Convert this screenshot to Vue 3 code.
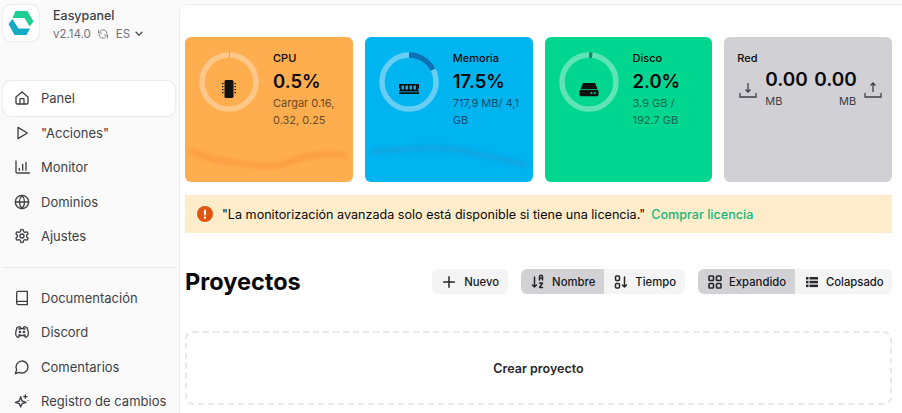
<template>
  <div class="page">
    <aside class="sidebar">
      <div class="brand">
        <div class="logo">
          <svg width="26" height="24" viewBox="0 0 26 24">
            <path d="M7.500 0H19.500L25.500 10.500 21.500 15.500 16.500 7H4.500Z" fill="#1fce91" />
            <path d="M4.500 8 .5 13 6.500 24H18.500L22 17.500H10.500Z" fill="#14a9c4" />
          </svg>
        </div>
        <div class="brand-text">
          <div class="brand-name">Easypanel</div>
          <div class="brand-meta">
            <span>v2.14.0</span>
            <svg class="refresh" width="12" height="12" viewBox="0 0 24 24" fill="none" stroke="#8a8a92" stroke-width="2" stroke-linecap="round" stroke-linejoin="round">
              <path d="M20 11A8 8 0 0 0 5.500 7L3 10M3 4v6h6" />
              <path d="M4 13a8 8 0 0 0 14.500 4l2.500-3M21 20v-6h-6" />
            </svg>
            <span class="lang">ES</span>
            <svg width="10" height="10" viewBox="0 0 24 24" fill="none" stroke="#55555c" stroke-width="3.500" stroke-linecap="round" stroke-linejoin="round">
              <path d="M5 8l7 7 7-7" />
            </svg>
          </div>
        </div>
      </div>

      <nav class="nav">
        <a v-for="item in mainNav" :key="item.label" class="nav-item" :class="{ active: item.active }">
          <svg width="16" height="16" viewBox="0 0 24 24" fill="none" stroke="#3f3f46" stroke-width="2" stroke-linecap="round" stroke-linejoin="round" v-html="item.icon"></svg>
          <span>{{ item.label }}</span>
        </a>
      </nav>
      <div class="sep"></div>
      <nav class="nav">
        <a v-for="item in docNav" :key="item.label" class="nav-item">
          <svg width="16" height="16" viewBox="0 0 24 24" fill="none" stroke="#3f3f46" stroke-width="2" stroke-linecap="round" stroke-linejoin="round" v-html="item.icon"></svg>
          <span>{{ item.label }}</span>
        </a>
      </nav>
    </aside>

    <main class="main">
      <section class="cards">
        <div v-for="card in cards" :key="card.title" class="card" :style="{ background: card.bg }">
          <div class="card-top">
            <div class="ring">
              <svg width="60" height="60" viewBox="0 0 60 60">
                <circle cx="30" cy="30" r="27" fill="none" :stroke="card.track" stroke-width="5.500" />
                <circle cx="30" cy="30" r="27" fill="none" :stroke="card.value" stroke-width="5.500" pathLength="100"
                  :stroke-dasharray="card.percent + ' 100'" transform="rotate(-90 30 30)" />
              </svg>
              <svg class="ring-icon" width="20" height="20" viewBox="0 0 20 20" v-html="card.icon"></svg>
            </div>
            <div class="card-text">
              <div class="card-title">{{ card.title }}</div>
              <div class="card-num">{{ card.percent }}%</div>
              <div class="card-sub" :style="{ color: card.sub }">{{ card.detail }}</div>
            </div>
          </div>
          <svg class="spark" width="168" height="30" viewBox="0 0 168 30">
            <defs>
              <filter :id="'blur' + card.title" x="-10%" y="-100%" width="120%" height="300%">
                <feGaussianBlur stdDeviation="2.200" />
              </filter>
            </defs>
            <path :d="card.line" fill="none" :stroke="card.spark" stroke-width="6" :filter="'url(#blur' + card.title + ')'" />
          </svg>
        </div>

        <div class="card net">
          <div class="card-title">Red</div>
          <div class="net-row">
            <svg class="net-icon" width="18" height="18" viewBox="0 0 18 18" fill="none" stroke="#3f3f46" stroke-width="1.300">
              <path d="M1 12v4h16v-4M9 2v9M6.500 8.500 9 11l2.500-2.500" />
            </svg>
            <div class="net-col">
              <div class="net-num">0.00</div>
              <div class="net-unit">MB</div>
            </div>
            <div class="net-col right">
              <div class="net-num">0.00</div>
              <div class="net-unit">MB</div>
            </div>
            <svg class="net-icon" width="18" height="18" viewBox="0 0 18 18" fill="none" stroke="#3f3f46" stroke-width="1.300">
              <path d="M1 12v4h16v-4M9 11V2M6.500 4.500 9 2l2.500 2.500" />
            </svg>
          </div>
          <svg class="spark" width="168" height="30" viewBox="0 0 168 30">
            <defs>
              <filter id="blurRed" x="-10%" y="-100%" width="120%" height="300%">
                <feGaussianBlur stdDeviation="2" />
              </filter>
            </defs>
            <path d="M5 14H162" fill="none" stroke="#a5a5ab" stroke-width="6" filter="url(#blurRed)" />
          </svg>
        </div>
      </section>

      <div class="alert">
        <svg class="alert-icon" width="16" height="16" viewBox="0 0 16 16">
          <circle cx="8" cy="8" r="8" fill="#e0560f" />
          <rect x="7" y="3.500" width="2" height="6" rx="1" fill="#fff" />
          <circle cx="8" cy="11.700" r="1.100" fill="#fff" />
        </svg>
        <span>"La monitorización avanzada solo está disponible si tiene una licencia."</span>
        <a class="alert-link">Comprar licencia</a>
      </div>

      <div class="head">
        <h1>Proyectos</h1>
        <div class="actions">
          <button class="btn new">
            <svg width="16" height="16" viewBox="0 0 24 24" fill="none" stroke="#27272a" stroke-width="2.200" stroke-linecap="round">
              <path d="M12 4v16M4 12h16" />
            </svg>
            <span>Nuevo</span>
          </button>
          <div class="group">
            <button class="btn on">
              <svg width="16" height="16" viewBox="0 0 16 16" fill="none" stroke="#27272a" stroke-width="1.500" stroke-linecap="round" stroke-linejoin="round">
                <path d="M4.500 3v10M2.500 11l2 2 2-2" />
                <path d="M9.500 6.500V3.200a1.500 1.500 0 0 1 3 0v3.300M9.500 4.800h3M9.500 9.500h3l-3 4.500h3" transform="translate(0 -.5)" />
              </svg>
              <span>Nombre</span>
            </button>
            <button class="btn">
              <svg width="16" height="16" viewBox="0 0 16 16" fill="none" stroke="#27272a" stroke-width="1.500" stroke-linecap="round" stroke-linejoin="round">
                <rect x="2.500" y="2" width="4" height="4.500" rx="1" />
                <rect x="2.500" y="9.500" width="4" height="4.500" rx="1" />
                <path d="M11.500 3v10M9.500 11l2 2 2-2" />
              </svg>
              <span>Tiempo</span>
            </button>
          </div>
          <div class="group">
            <button class="btn on fixed">
              <svg width="16" height="16" viewBox="0 0 16 16" fill="none" stroke="#27272a" stroke-width="1.600">
                <rect x="2" y="2" width="4.500" height="4.500" rx=".8" />
                <rect x="9.500" y="2" width="4.500" height="4.500" rx=".8" />
                <rect x="2" y="9.500" width="4.500" height="4.500" rx=".8" />
                <rect x="9.500" y="9.500" width="4.500" height="4.500" rx=".8" />
              </svg>
              <span>Expandido</span>
            </button>
            <button class="btn fixed">
              <svg width="16" height="16" viewBox="0 0 16 16" fill="#27272a">
                <rect x="2" y="3" width="2.500" height="2.500" />
                <rect x="5.500" y="3" width="8.500" height="2.500" />
                <rect x="2" y="6.800" width="2.500" height="2.500" />
                <rect x="5.500" y="6.800" width="8.500" height="2.500" />
                <rect x="2" y="10.600" width="2.500" height="2.500" />
                <rect x="5.500" y="10.600" width="8.500" height="2.500" />
              </svg>
              <span>Colapsado</span>
            </button>
          </div>
        </div>
      </div>

      <div class="create">Crear proyecto</div>
    </main>
  </div>
</template>

<script setup>
const mainNav = [
  { label: 'Panel', active: true, icon: '<path d="M3 10.500 12 3l9 7.500V19a2 2 0 0 1-2 2H5a2 2 0 0 1-2-2z"/><path d="M9 21v-7a1 1 0 0 1 1-1h4a1 1 0 0 1 1 1v7"/>' },
  { label: '"Acciones"', icon: '<path d="M6 3.500 20 12 6 20.500z"/>' },
  { label: 'Monitor', icon: '<path d="M3 3v16a2 2 0 0 0 2 2h18M8 17v-3M13 17V8M18 17V5"/>' },
  { label: 'Dominios', icon: '<circle cx="12" cy="12" r="10"/><path d="M2 12h20M12 2a15 15 0 0 1 0 20M12 2a15 15 0 0 0 0 20"/>' },
  { label: 'Ajustes', icon: '<path d="M12.200 2h-.4a2 2 0 0 0-2 2v.2a2 2 0 0 1-1 1.700l-.4.300a2 2 0 0 1-2 0l-.2-.1a2 2 0 0 0-2.700.7l-.2.400a2 2 0 0 0 .7 2.700l.2.100a2 2 0 0 1 1 1.700v.5a2 2 0 0 1-1 1.700l-.2.100a2 2 0 0 0-.7 2.700l.2.400a2 2 0 0 0 2.700.7l.2-.1a2 2 0 0 1 2 0l.4.300a2 2 0 0 1 1 1.700v.2a2 2 0 0 0 2 2h.4a2 2 0 0 0 2-2v-.2a2 2 0 0 1 1-1.700l.4-.3a2 2 0 0 1 2 0l.2.100a2 2 0 0 0 2.700-.7l.2-.4a2 2 0 0 0-.7-2.700l-.2-.1a2 2 0 0 1-1-1.700v-.5a2 2 0 0 1 1-1.700l.2-.1a2 2 0 0 0 .7-2.700l-.2-.4a2 2 0 0 0-2.700-.7l-.2.100a2 2 0 0 1-2 0l-.4-.3a2 2 0 0 1-1-1.700V4a2 2 0 0 0-2-2z"/><circle cx="12" cy="12" r="3"/>' },
]

const docNav = [
  { label: 'Documentación', icon: '<path d="M4 19.500v-15A2.500 2.500 0 0 1 6.500 2H20v20H6.500a2.500 2.500 0 0 1 0-5H20"/>' },
  { label: 'Discord', icon: '<circle cx="9" cy="12" r="1"/><circle cx="15" cy="12" r="1"/><path d="M7.500 7.500c3-1 6-1 9 0M7 16.500c3.500 1 6.500 1 10 0"/><path d="M15.500 17c0 1 1.500 3 2 3 1.500 0 2.800-1.700 3.500-3 .7-1.700.5-6-1.500-11.500-1.500-1-3-1.300-4.500-1.500l-1 2.500M8.500 17c0 1-1.400 3-2 3-1.500 0-2.800-1.700-3.500-3-.7-1.700-.5-6 1.500-11.500C6 4.500 7.500 4.200 9 4l1 2.500"/>' },
  { label: 'Comentarios', icon: '<path d="M7.900 20A9 9 0 1 0 4 16.100L2 22z"/>' },
  { label: 'Registro de cambios', icon: '<path d="M10 6.500 12 13l6 2-6 2-2 5-2-5-6-2 6-2z" transform="translate(0 -1)"/><path d="M17 3v5M14.500 5.500h5M21 11h.01"/>' },
]

const chip = '<rect x="5.500" y="1" width="9" height="18" rx="1.500" fill="#111"/><g fill="#111"><rect x="3" y="4" width="1.500" height="1.200"/><rect x="3" y="7" width="1.500" height="1.200"/><rect x="3" y="10" width="1.500" height="1.200"/><rect x="3" y="13" width="1.500" height="1.200"/><rect x="15.500" y="4" width="1.500" height="1.200"/><rect x="15.500" y="7" width="1.500" height="1.200"/><rect x="15.500" y="10" width="1.500" height="1.200"/><rect x="15.500" y="13" width="1.500" height="1.200"/></g>'
const ram = '<path d="M0 5h20v4.500H19v2h1V15H0v-3.500h1v-2H0z" fill="#111"/><g fill="#00b4f0"><rect x="2.500" y="6.500" width="2.500" height="4"/><rect x="6.500" y="6.500" width="2.500" height="4"/><rect x="10.500" y="6.500" width="2.500" height="4"/><rect x="14.500" y="6.500" width="2.500" height="4"/></g><rect x="0" y="12.500" width="20" height=".8" fill="#00b4f0"/>'
const disk = '<path d="M4 4h12l2.500 6H1.500z" fill="#111"/><rect x="0.500" y="10.800" width="19" height="6.500" rx="1.500" fill="#111"/><circle cx="12.500" cy="14" r="1" fill="#00d68f"/><circle cx="15.800" cy="14" r="1" fill="#00d68f"/>'

const cards = [
  { title: 'CPU', percent: '0.5', detail: 'Cargar 0.16, 0.32, 0.25', bg: '#ffae4f', track: '#ffc788', value: '#ef8e36', sub: '#6a4a25', spark: '#fc9d43', icon: chip, line: 'M5 8C20 16 35 20 68 23S100 20 120 15 150 13 162 13' },
  { title: 'Memoria', percent: '17.5', detail: '717,9 MB/ 4,1 GB', bg: '#00b4f0', track: '#66cdf5', value: '#0a72b5', sub: '#0b4f72', spark: '#0aa5e2', icon: ram, line: 'M5 10C30 8 50 6 72 6S120 14 162 23' },
  { title: 'Disco', percent: '2.0', detail: '3.9 GB / 192.7 GB', bg: '#00d68f', track: '#5fe4b6', value: '#168a66', sub: '#0e6a50', spark: '#06c484', icon: disk, line: 'M5 15H162' },
]
</script>

<style>
html,
body {
  background: #fafafa;
}
</style>

<style scoped>
.page {
  display: flex;
  width: 902px;
  height: 413px;
  overflow: hidden;
  background: #fafafa;
  font-family: Inter, "Liberation Sans", sans-serif;
  color: #09090b;
}
.sidebar {
  width: 179px;
  height: 413px;
  flex: none;
  box-sizing: border-box;
  padding: 5px 4px 0 3px;
}
.brand {
  display: flex;
  gap: 14px;
  height: 36px;
}
.logo {
  width: 36px;
  height: 36px;
  border-radius: 8px;
  background: #fff;
  box-shadow: 0 0 2px rgba(0, 0, 0, 0.18);
  display: flex;
  align-items: center;
  justify-content: center;
}
.brand-name {
  font-size: 12.500px;
  line-height: 16px;
  margin-top: 3px;
  font-weight: 500;
  color: #3f3f46;
}
.brand-meta {
  display: flex;
  align-items: center;
  font-size: 11.500px;
  line-height: 16px;
  margin-top: 2px;
  color: #71717a;
}
.refresh {
  margin: 0 7px 0 6px;
}
.lang {
  margin-right: 4px;
}
.nav {
  display: flex;
  flex-direction: column;
}
.brand + .nav {
  margin-top: 40px;
}
.nav-item {
  display: flex;
  align-items: center;
  gap: 11px;
  height: 34.500px;
  padding-left: 11px;
  box-sizing: border-box;
  font-size: 13px;
  font-weight: 400;
  color: #3f3f46;
  border-radius: 8px;
}
.nav-item.active {
  background: #fff;
  box-shadow: 0 0 2px rgba(0, 0, 0, 0.2);
}
.sep {
  height: 1px;
  background: #e6e6e8;
  margin: 13px 0;
}
.main {
  flex: 1;
  min-width: 0;
  height: 409px;
  margin-top: 4px;
  box-sizing: border-box;
  padding: 32px 10px 0 5px;
  background: #fff;
  border-top: 1px solid #eeeeef;
  border-left: 1px solid #eeeeef;
  border-top-left-radius: 8px;
}
.cards {
  display: grid;
  grid-template-columns: repeat(4, 1fr);
  gap: 12px;
}
.card {
  position: relative;
  height: 145px;
  border-radius: 6px;
  overflow: hidden;
}
.card-top {
  display: flex;
  padding: 13px 0 0 14px;
  gap: 14px;
}
.ring {
  position: relative;
  width: 60px;
  height: 60px;
  flex: none;
  margin-top: 2px;
}
.ring-icon {
  position: absolute;
  left: 20px;
  top: 27px;
}
.card-text {
  max-width: 70px;
}
.card-title {
  font-size: 11px;
  line-height: 16px;
  font-weight: 500;
}
.card-num {
  font-size: 18.500px;
  line-height: 24px;
  font-weight: 600;
  margin-top: 3px;
}
.card-sub {
  font-size: 11px;
  line-height: 17px;
  margin-top: 2px;
}
.spark {
  position: absolute;
  left: 0;
  bottom: 10px;
}
.net {
  background: #d0d0d5;
  padding: 13px 0 0 13px;
  box-sizing: border-box;
}
.net-row {
  display: flex;
  align-items: center;
  gap: 8px;
  margin: 2px 0 0 2px;
}
.net-icon {
  flex: none;
  margin-top: 2px;
}
.net-col {
  width: 42px;
}
.net-col.right {
  text-align: right;
  margin-left: -1px;
}
.net-num {
  font-size: 19px;
  line-height: 24px;
  font-weight: 600;
}
.net-unit {
  font-size: 11px;
  line-height: 16px;
  margin-top: 1px;
  color: #3f3f46;
}
.net .spark {
  bottom: 28px;
}
.alert {
  display: flex;
  align-items: center;
  margin-top: 13px;
  height: 38px;
  padding-left: 12px;
  gap: 6px;
  background: #feeccb;
  font-size: 12.600px;
}
.alert-icon {
  margin-right: 3px;
}
.alert-link {
  color: #10b981;
  font-weight: 500;
}
.head {
  display: flex;
  align-items: center;
  justify-content: space-between;
  margin-top: 36px;
}
h1 {
  margin: 0;
  font-size: 23.500px;
  line-height: 25px;
  font-weight: 700;
}
.actions {
  display: flex;
  gap: 13px;
}
.group {
  display: flex;
}
.btn {
  display: flex;
  align-items: center;
  gap: 6px;
  height: 25px;
  padding: 0 9px;
  border: 0;
  background: #f4f4f5;
  border-radius: 6px;
  font: 500 11.300px Inter, "Liberation Sans", sans-serif;
  color: #18181b;
}
.btn.new {
  gap: 7px;
}
.btn.fixed {
  width: 97px;
  padding: 0 0 0 9px;
}
.group .btn:first-child {
  border-radius: 6px 0 0 6px;
}
.group .btn:last-child {
  border-radius: 0 6px 6px 0;
}
.btn.on {
  background: #d2d2d6;
}
.create {
  margin-top: 37px;
  height: 74px;
  box-sizing: border-box;
  border: 2px dashed #e8e8ea;
  border-radius: 8px;
  display: flex;
  align-items: center;
  justify-content: center;
  font-size: 12.500px;
  font-weight: 600;
  color: #27272a;
}
</style>
